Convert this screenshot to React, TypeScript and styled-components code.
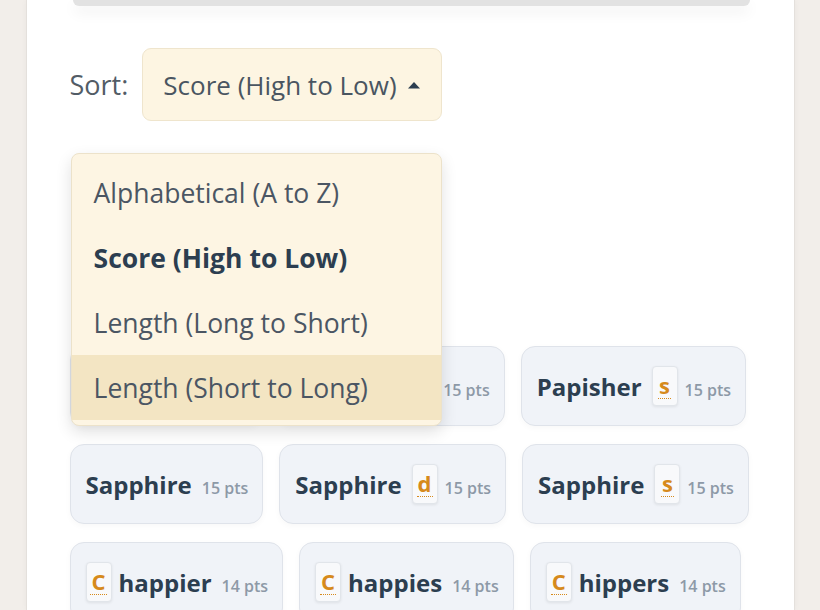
import React from "react";
import styled, { createGlobalStyle } from "styled-components";

const GlobalStyle = createGlobalStyle`
  html, body { margin: 0; padding: 0; }
  body {
    background: #f2eeea;
    font-family: "Open Sans", "Noto Sans", sans-serif;
    color: #2c3e50;
  }
`;

const Page = styled.div`
  width: 820px;
  height: 610px;
  overflow: hidden;
  display: flex;
  justify-content: center;
`;

const Panel = styled.main`
  width: 769px;
  background: #ffffff;
  border-left: 1px solid #e4e0dc;
  border-right: 1px solid #e4e0dc;
  padding: 0 44px 0 43px;
  box-sizing: border-box;
  box-shadow: 0 0 6px rgba(0, 0, 0, 0.04);
`;

const TopCard = styled.div`
  height: 6px;
  margin: 0 0 0 3px;
  background: #e2e2e2;
  border-radius: 0 0 10px 10px;
  box-shadow: 0 6px 14px rgba(0, 0, 0, 0.08);
`;

const Controls = styled.section`
  display: flex;
  flex-direction: column;
  gap: 33px;
  margin-top: 42px;
`;

const ControlRow = styled.div`
  display: flex;
  align-items: center;
  gap: 14px;
`;

const Label = styled.span`
  font-size: 27px;
  color: #525c66;
`;

const SelectWrap = styled.div`
  position: relative;
`;

const SelectButton = styled.button`
  display: flex;
  align-items: center;
  gap: 10px;
  height: 73px;
  padding: 0 20px;
  background: #fdf5e2;
  border: 1px solid #efe5cd;
  border-radius: 9px;
  font-family: inherit;
  font-size: 26px;
  color: #4a5561;
  cursor: pointer;
`;

const Caret = styled.svg`
  width: 14px;
  height: 8px;
  flex: none;
`;

const Menu = styled.ul`
  position: absolute;
  top: calc(100% + 32px);
  right: 0;
  width: 371px;
  margin: 0;
  padding: 6px 0 5px;
  list-style: none;
  background: #fdf5e3;
  border: 1px solid #ece2ca;
  border-radius: 8px;
  box-shadow: 0 6px 16px rgba(0, 0, 0, 0.12);
  box-sizing: border-box;
  z-index: 5;
`;

const MenuItem = styled.li<{ $selected?: boolean; $hover?: boolean }>`
  height: 65px;
  display: flex;
  align-items: center;
  padding: 0 22px;
  font-size: 26.5px;
  font-weight: ${(p) => (p.$selected ? 700 : 400)};
  color: ${(p) => (p.$selected ? "#2c3e50" : "#4b5663")};
  background: ${(p) => (p.$hover ? "#f3e5c3" : "transparent")};
  white-space: nowrap;
`;

const WordGrid = styled.section`
  display: flex;
  flex-direction: column;
  gap: 18px;
  margin-top: 119px;
`;

const WordRow = styled.div`
  display: flex;
  gap: 16px;
`;

const WordCard = styled.div`
  display: flex;
  align-items: center;
  gap: 7px;
  height: 80px;
  padding: 0 14px 0 15px;
  box-sizing: border-box;
  background: #f0f3f8;
  border: 1px solid #dfe3ea;
  border-radius: 14px;
  box-shadow: 0 2px 6px rgba(0, 0, 0, 0.03);
  white-space: nowrap;
  flex: none;
`;

const Word = styled.span`
  font-size: 24px;
  font-weight: 700;
  color: #2c3e50;
  margin-right: 3px;
`;

const Chip = styled.span`
  display: flex;
  align-items: center;
  justify-content: center;
  width: 26px;
  height: 40px;
  box-sizing: border-box;
  background: #f8f9fb;
  border: 1px solid #e1e5ea;
  border-radius: 4px;
  box-shadow: 0 1px 3px rgba(0, 0, 0, 0.08);
`;

const ChipLetter = styled.span`
  font-size: 22px;
  font-weight: 700;
  color: #d68a1c;
  line-height: 24px;
  padding: 0 1px 1px;
  border-bottom: 1px dotted #d68a1c;
`;

const Points = styled.span`
  font-size: 16px;
  font-weight: 600;
  color: #8d99a7;
  padding-top: 8px;
`;

const CaretIcon = ({ up }: { up?: boolean }) => (
  <Caret viewBox="0 0 14 8" aria-hidden="true">
    <path d={up ? "M1 7.5 L7 1 L13 7.5 Z" : "M1 0.5 L7 7 L13 0.5 Z"} fill="#2c3e50" />
  </Caret>
);

type Entry = { word: string; pts: number; pre?: string; post?: string };

const rows: Entry[][] = [
  [
    { word: "Papisher", pts: 15 },
    { word: "Sapphire", pts: 15, post: "r" },
    { word: "Papisher", pts: 15, post: "s" },
  ],
  [
    { word: "Sapphire", pts: 15 },
    { word: "Sapphire", pts: 15, post: "d" },
    { word: "Sapphire", pts: 15, post: "s" },
  ],
  [
    { word: "happier", pts: 14, pre: "C" },
    { word: "happies", pts: 14, pre: "C" },
    { word: "hippers", pts: 14, pre: "C" },
  ],
];

const options = [
  "Alphabetical (A to Z)",
  "Score (High to Low)",
  "Length (Long to Short)",
  "Length (Short to Long)",
];

const LetterChip = ({ letter }: { letter: string }) => (
  <Chip>
    <ChipLetter>{letter}</ChipLetter>
  </Chip>
);

export default function App() {
  return (
    <Page>
      <GlobalStyle />
      <Panel>
        <TopCard />
        <Controls>
          <ControlRow>
            <Label>Sort:</Label>
            <SelectWrap>
              <SelectButton>
                Score (High to Low) <CaretIcon up />
              </SelectButton>
              <Menu>
                {options.map((o, i) => (
                  <MenuItem key={o} $selected={i === 1} $hover={i === 3}>
                    {o}
                  </MenuItem>
                ))}
              </Menu>
            </SelectWrap>
          </ControlRow>
          <ControlRow>
            <Label>Filter:</Label>
            <SelectWrap>
              <SelectButton>
                All word lengths <CaretIcon />
              </SelectButton>
            </SelectWrap>
          </ControlRow>
        </Controls>
        <WordGrid>
          {rows.map((row, r) => (
            <WordRow key={r}>
              {row.map((w, i) => (
                <WordCard key={i}>
                  {w.pre && <LetterChip letter={w.pre} />}
                  <Word>{w.word}</Word>
                  {w.post && <LetterChip letter={w.post} />}
                  <Points>{w.pts} pts</Points>
                </WordCard>
              ))}
            </WordRow>
          ))}
        </WordGrid>
      </Panel>
    </Page>
  );
}
